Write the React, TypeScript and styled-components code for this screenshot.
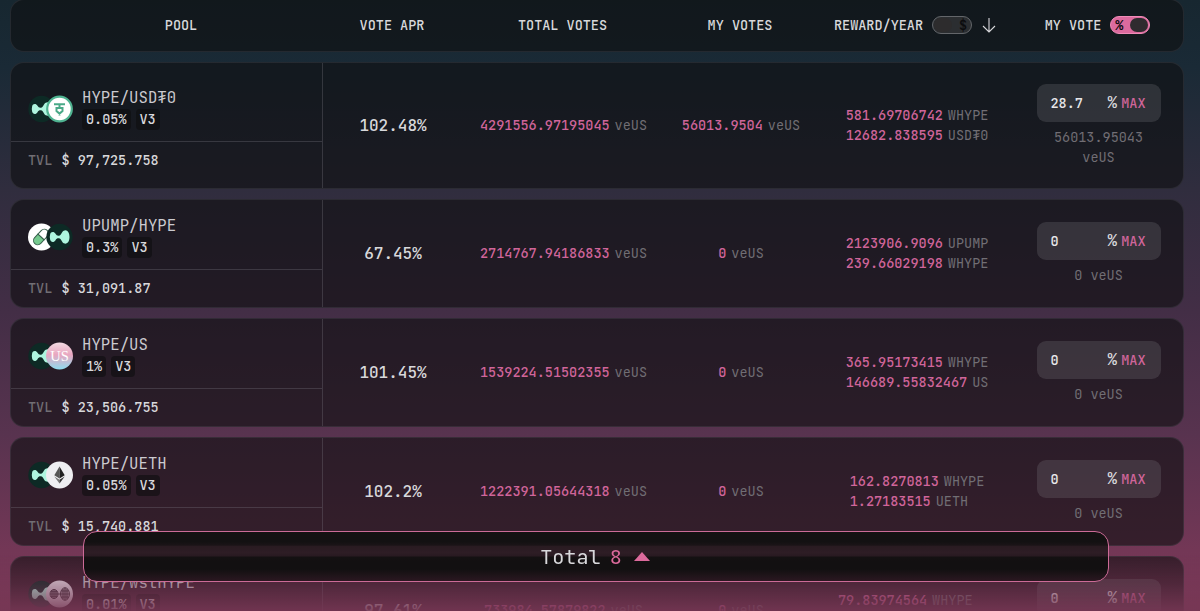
import { ReactNode } from 'react'
import styled, { createGlobalStyle } from 'styled-components'

const GlobalStyle = createGlobalStyle`
  * {
    box-sizing: border-box;
  }
  html, body {
    margin: 0;
    height: 611px;
    overflow: hidden;
  }
  body {
    font-family: 'JetBrains Mono', 'DejaVu Sans Mono', monospace;
    font-size: 13.5px;
    font-weight: 500;
    line-height: 20px;
    color: #d8d8db;
    background: #182832;
  }
`

const Page = styled.div`
  height: 611px;
  overflow: hidden;
  padding: 0 16px 0 10px;
  background: linear-gradient(
    180deg,
    #172730 0%,
    #1a2a36 11%,
    #302d3e 31%,
    #432e46 51%,
    #58334f 71%,
    #733756 90%,
    #7a3858 100%
  );
`

const List = styled.div`
  display: flex;
  flex-direction: column;
  gap: 10px;
`

const Card = styled.div<{ $height: number }>`
  display: grid;
  grid-template-columns: 312px 140px 201px 154px 198px 1fr;
  flex-shrink: 0;
  height: ${(props) => props.$height}px;
  border: 1px solid rgba(110, 110, 120, 0.2);
  border-radius: 14px;
  background: rgba(15, 15, 16, 0.61);
`

const HeadCard = styled(Card)`
  margin-top: -1px;
`

const HeadCell = styled.div<{ $left?: number; $right?: number }>`
  display: flex;
  align-items: center;
  justify-content: center;
  padding: 0 ${(props) => props.$right ?? 2}px 1px ${(props) => props.$left ?? 0}px;
  white-space: nowrap;
`

const Switch = styled.span<{ $on?: boolean }>`
  display: flex;
  flex-direction: ${(props) => (props.$on ? 'row' : 'row-reverse')};
  align-items: center;
  justify-content: space-between;
  width: 40px;
  height: 18px;
  margin-left: 9px;
  padding: 0 ${(props) => (props.$on ? '1px 0 4px' : '4px 0 1px')};
  border: 1px solid ${(props) => (props.$on ? '#f08cb8' : '#63666a')};
  border-radius: 9px;
  background: ${(props) => (props.$on ? '#dc6a9e' : '#2b2e31')};
  color: #0c0c0e;
  font-size: 13.5px;
  font-weight: 700;
`

const Knob = styled.i<{ $on?: boolean }>`
  width: 18px;
  height: 14px;
  border-radius: 7px;
  background: ${(props) => (props.$on ? '#2f2b2f' : '#2d2c2d')};
`

const SortArrow = styled.svg`
  margin-left: 10px;
`

const PoolCell = styled.div`
  display: grid;
  grid-template-rows: auto auto;
  align-content: stretch;
  border-right: 1px solid rgba(130, 125, 135, 0.3);
`

const PoolTop = styled.div`
  display: flex;
  align-items: flex-end;
  padding: 14px 0 11px 17px;
  border-bottom: 1px solid rgba(130, 125, 135, 0.3);
`

const Coins = styled.svg`
  flex-shrink: 0;
  margin-right: 7px;
  margin-bottom: 7px;
`

const PoolName = styled.div`
  font-size: 15.7px;
  font-weight: 400;
  line-height: 22px;
  color: #cbcacf;
`

const Tags = styled.div`
  display: flex;
  gap: 5px;
`

const Tag = styled.span`
  height: 21px;
  padding: 0 4px;
  border-radius: 4px;
  line-height: 21px;
  background: rgba(14, 14, 15, 0.6);
`

const Tvl = styled.div`
  min-height: 37px;
  padding: 8px 0 9px 17px;
  white-space: pre;
`

const Muted = styled.span`
  font-weight: 400;
  color: #716e74;
`

const TvlLabel = styled(Muted)`
  margin-right: 1px;
  font-weight: 500;
`

const Pink = styled.span`
  color: #d0659a;
`

const Cell = styled.div`
  display: flex;
  flex-direction: column;
  align-items: center;
  justify-content: center;
  padding-bottom: 1px;
  white-space: nowrap;
`

const Apr = styled(Cell)`
  padding-bottom: 0;
  font-size: 16px;
`

const VoteCell = styled(Cell)`
  padding: 0 2px 0 0;
`

const Amount = styled.div`
  display: flex;
  gap: 5px;
`

const Rewards = styled.div<{ $wide?: boolean }>`
  min-width: ${(props) => (props.$wide ? 158 : 0)}px;
  min-height: 40px;
`

const VoteBox = styled.div`
  display: flex;
  align-items: center;
  width: 124px;
  height: 38px;
  margin-bottom: 5px;
  padding: 0 15px 0 14px;
  border-radius: 9px;
  background: rgba(140, 140, 145, 0.22);
`

const VoteValue = styled.span`
  flex: 1;
  color: #e8e8ea;
`

const Percent = styled.span`
  margin-right: 4px;
  font-size: 16px;
`

const VoteNote = styled.div`
  width: 110px;
  min-height: 20px;
  text-align: center;
  white-space: normal;
  font-weight: 400;
  color: #716e74;
`

const Fade = styled.div`
  position: fixed;
  right: 0;
  bottom: 0;
  left: 0;
  height: 56px;
  background: linear-gradient(
    180deg,
    rgba(118, 55, 84, 0) 0%,
    rgba(118, 55, 84, 0.38) 50%,
    rgba(118, 55, 84, 0.9) 100%
  );
`

const TotalBar = styled.div`
  position: fixed;
  top: 531px;
  left: 83px;
  display: flex;
  align-items: center;
  justify-content: center;
  width: 1026px;
  height: 51px;
  padding: 0 2px 0 0;
  border: 1px solid #cc6b97;
  border-radius: 14px;
  font-size: 20.2px;
  font-weight: 400;
  background: linear-gradient(
    180deg,
    #151112 0%,
    #131112 20%,
    #1b1417 27%,
    #291b21 29%,
    #2e1d25 42%,
    #291a21 49%,
    #151113 51%,
    #121011 60%,
    #121011 76%,
    #2b1821 100%
  );
`

const Count = styled.span`
  margin: 0 12px 0 9px;
  color: #dc6a9c;
`

type CoinKind = 'hype' | 'usdt' | 'upump' | 'us' | 'ueth' | 'wst'

const Blob = () => (
  <path
    d="M-9.4 -2.6C-8.8 -5.6 -5.4 -5.8 -4 -3.2C-3 -1.4 -1.4 -.9 .2 -1.6C2.4 -2.6 2.2 -6.2 5.2 -6.6C8.4 -7 10 -3.8 10 0C10 3.8 8.4 7 5.2 6.6C2.2 6.2 2.4 2.6 .2 1.6C-1.4 .9 -3 1.4 -4 3.2C-5.4 5.8 -8.8 5.6 -9.4 2.6C-9.8 1 -9.8 -1 -9.4 -2.6Z"
    fill="#aef6df"
  />
)

const coinArt: Record<CoinKind, ReactNode> = {
  hype: (
    <>
      <circle r="13.2" fill="#0d2a25" />
      <Blob />
    </>
  ),
  usdt: (
    <>
      <circle r="12.3" fill="#fff" stroke="#4fb391" strokeWidth="2.2" />
      <path
        d="M-5.5 -4.8H5.5M0 -4.8V-1.5M-3 -1V2L0 4.6L3 2V-1ZM0 4V6.5"
        fill="none"
        stroke="#4aa988"
        strokeWidth="2"
      />
    </>
  ),
  upump: (
    <>
      <circle r="13.5" fill="#fff" />
      <g transform="translate(-.5 0) rotate(43)" stroke="#35604b" strokeWidth="1">
        <path d="M-4.2 0V-4.8A4.2 4.2 0 0 1 4.2 -4.8V0Z" fill="#fff" />
        <path d="M-4.2 0V4.8A4.2 4.2 0 0 0 4.2 4.8V0Z" fill="#75c98e" />
      </g>
    </>
  ),
  us: (
    <>
      <circle r="13.5" fill="url(#usFill)" />
      <text
        y="5"
        textAnchor="middle"
        fontFamily="Liberation Serif, serif"
        fontSize="14.5"
        fill="#fff"
      >
        US
      </text>
    </>
  ),
  ueth: (
    <>
      <circle r="13.5" fill="#eeeef1" />
      <path d="M0 -8.5L-5.2 .3L0 3.4Z" fill="#555" />
      <path d="M0 -8.5L5.2 .3L0 3.4Z" fill="#222" />
      <path d="M-5.2 1.6L0 8.6V4.7Z" fill="#777" />
      <path d="M5.2 1.6L0 8.6V4.7Z" fill="#333" />
    </>
  ),
  wst: (
    <>
      <circle r="13.5" fill="#e6e1e8" />
      <g fill="#a9a3aa" stroke="#332c34" strokeWidth=".9">
        <ellipse cx="-5.5" rx="4" ry="4.6" />
        <ellipse cx="5.5" rx="4.5" ry="6.3" />
        <path d="M-9.5 0H10M-5.5 -4.6V4.6M5.5 -6.3V6.3M-8.7 -2.3H-2.2M-8.7 2.3H-2.2M1.8 -3H9.2M1.8 3H9.2M3.5 -5V5M7.5 -5V5M-7.5 -4V4M-3.5 -4V4" />
      </g>
    </>
  ),
}

type Pool = {
  name: string
  coins: [CoinKind, CoinKind]
  fee: string
  tvl?: string
  apr: string
  total: string
  mine: string
  rewards: [string, string][]
  vote: string
  note?: string
  height: number
}

const pools: Pool[] = [
  {
    name: 'HYPE/USD₮0',
    coins: ['hype', 'usdt'],
    fee: '0.05%',
    tvl: '97,725.758',
    apr: '102.48%',
    total: '4291556.97195045',
    mine: '56013.9504',
    rewards: [
      ['581.69706742', 'WHYPE'],
      ['12682.838595', 'USD₮0'],
    ],
    vote: '28.7',
    note: '56013.95043 veUS',
    height: 127,
  },
  {
    name: 'UPUMP/HYPE',
    coins: ['upump', 'hype'],
    fee: '0.3%',
    tvl: '31,091.87',
    apr: '67.45%',
    total: '2714767.94186833',
    mine: '0',
    rewards: [
      ['2123906.9096', 'UPUMP'],
      ['239.66029198', 'WHYPE'],
    ],
    vote: '0',
    note: '0 veUS',
    height: 109,
  },
  {
    name: 'HYPE/US',
    coins: ['hype', 'us'],
    fee: '1%',
    tvl: '23,506.755',
    apr: '101.45%',
    total: '1539224.51502355',
    mine: '0',
    rewards: [
      ['365.95173415', 'WHYPE'],
      ['146689.55832467', 'US'],
    ],
    vote: '0',
    note: '0 veUS',
    height: 109,
  },
  {
    name: 'HYPE/UETH',
    coins: ['hype', 'ueth'],
    fee: '0.05%',
    tvl: '15,740.881',
    apr: '102.2%',
    total: '1222391.05644318',
    mine: '0',
    rewards: [
      ['162.8270813', 'WHYPE'],
      ['1.27183515', 'UETH'],
    ],
    vote: '0',
    note: '0 veUS',
    height: 109,
  },
  {
    name: 'HYPE/wstHYPE',
    coins: ['hype', 'wst'],
    fee: '0.01%',
    apr: '97.61%',
    total: '733984.57879822',
    mine: '0',
    rewards: [['79.83974564', 'WHYPE']],
    vote: '0',
    height: 109,
  },
]

const PoolRow = ({ pool }: { pool: Pool }) => (
  <Card $height={pool.height}>
    <PoolCell>
      <PoolTop>
        <Coins width="47" height="28" viewBox="0 0 47 28">
          <defs>
            <linearGradient id="usFill" x1="0" y1="0" x2="0" y2="1">
              <stop offset="0" stopColor="#f3dbe3" />
              <stop offset=".45" stopColor="#e9a6c0" />
              <stop offset="1" stopColor="#8fdcf0" />
            </linearGradient>
          </defs>
          <g transform="translate(13.5 14)">{coinArt[pool.coins[0]]}</g>
          <g transform="translate(31.5 14)">{coinArt[pool.coins[1]]}</g>
        </Coins>
        <div>
          <PoolName>{pool.name}</PoolName>
          <Tags>
            <Tag>{pool.fee}</Tag>
            <Tag>V3</Tag>
          </Tags>
        </div>
      </PoolTop>
      <Tvl>
        {pool.tvl && (
          <>
            <TvlLabel>TVL</TvlLabel> $ {pool.tvl}
          </>
        )}
      </Tvl>
    </PoolCell>
    <Apr>{pool.apr}</Apr>
    <Cell>
      <Amount>
        <Pink>{pool.total}</Pink>
        <Muted>veUS</Muted>
      </Amount>
    </Cell>
    <Cell>
      <Amount>
        <Pink>{pool.mine}</Pink>
        <Muted>veUS</Muted>
      </Amount>
    </Cell>
    <Cell>
      <Rewards $wide={pool.rewards.length === 1}>
        {pool.rewards.map(([amount, token]) => (
          <Amount key={token}>
            <Pink>{amount}</Pink>
            <Muted>{token}</Muted>
          </Amount>
        ))}
      </Rewards>
    </Cell>
    <VoteCell>
      <VoteBox>
        <VoteValue>{pool.vote}</VoteValue>
        <Percent>%</Percent>
        <Pink>MAX</Pink>
      </VoteBox>
      <VoteNote>{pool.note}</VoteNote>
    </VoteCell>
  </Card>
)

const App = () => (
  <>
    <GlobalStyle />
    <Page>
      <List>
        <HeadCard $height={53}>
          <HeadCell $left={30}>POOL</HeadCell>
          <HeadCell>VOTE APR</HeadCell>
          <HeadCell>TOTAL VOTES</HeadCell>
          <HeadCell>MY VOTES</HeadCell>
          <HeadCell $right={4}>
            REWARD/YEAR
            <Switch>
              $<Knob />
            </Switch>
            <SortArrow width="14" height="16" viewBox="0 0 14 16">
              <path
                d="M7 1V15M1 9L7 15L13 9"
                fill="none"
                stroke="#d8d8db"
                strokeWidth="1.1"
              />
            </SortArrow>
          </HeadCell>
          <HeadCell $right={4}>
            MY VOTE
            <Switch $on>
              %<Knob $on />
            </Switch>
          </HeadCell>
        </HeadCard>
        {pools.map((pool) => (
          <PoolRow key={pool.name} pool={pool} />
        ))}
      </List>
      <Fade />
      <TotalBar>
        Total<Count>8</Count>
        <svg width="16" height="9" viewBox="0 0 16 9">
          <path d="M0 9L8 0L16 9Z" fill="#dc6a9c" />
        </svg>
      </TotalBar>
    </Page>
  </>
)

export default App
